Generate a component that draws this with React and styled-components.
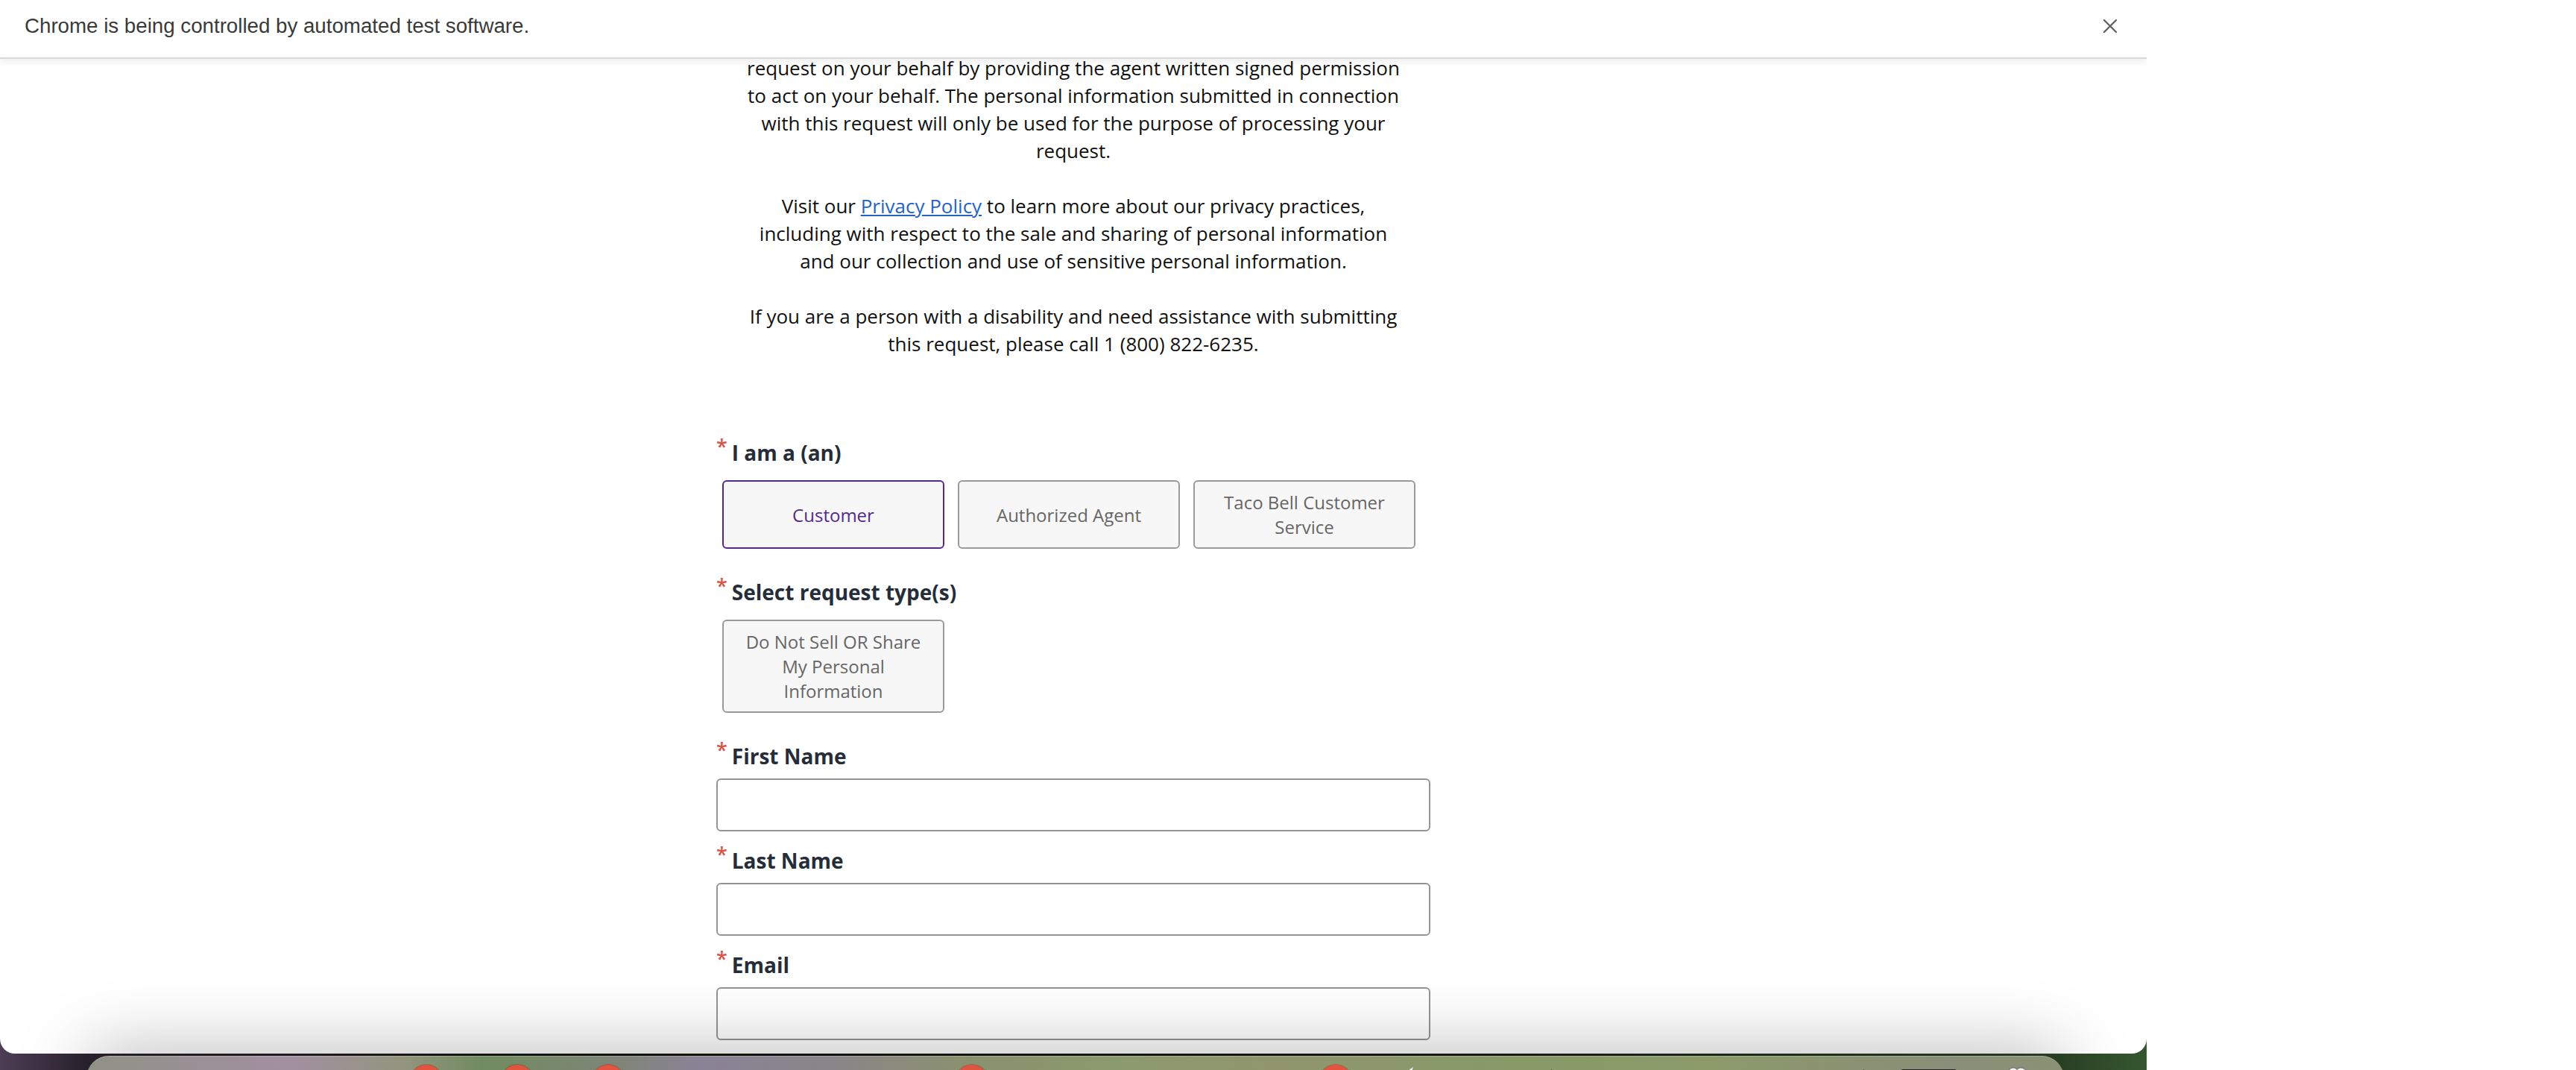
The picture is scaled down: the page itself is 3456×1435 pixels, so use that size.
import React from 'react';
import styled, { createGlobalStyle } from 'styled-components';

const GlobalStyle = createGlobalStyle`
	* {
		box-sizing: border-box;
	}
	html,
	body {
		margin: 0;
		padding: 0;
		background: #fff;
	}
	body {
		width: 3456px;
		height: 1435px;
		overflow: hidden;
		font-family: 'Open Sans', 'Liberation Sans', sans-serif;
	}
`;

const Screen = styled.div`
	display: flex;
	width: 3456px;
	height: 1435px;
	background: #fff;
`;

const Desktop = styled.div`
	width: 2880px;
	height: 1435px;
	flex: none;
	overflow: hidden;
	display: flex;
	flex-direction: column;
	background: linear-gradient(90deg, #4d3d55 0%, #2b2430 4%, #15170f 30%, #1a2016 70%, #2d4527 96%, #355630 100%);
`;

const Window = styled.div`
	height: 1413px;
	flex: none;
	background: #fff;
	border-radius: 0 0 20px 20px;
	overflow: hidden;
	display: flex;
	flex-direction: column;
`;

const Infobar = styled.div`
	position: relative;
	z-index: 2;
	flex: none;
	height: 79px;
	padding: 0 38px 8px 33px;
	display: flex;
	align-items: center;
	justify-content: space-between;
	background: #fff;
	border-bottom: 2px solid #d9d9d9;
	box-shadow: 0 3px 10px rgba(0, 0, 0, 0.08);
	font-family: 'Liberation Sans', Arial, sans-serif;
	font-size: 27.7px;
	color: #3a3a3a;
`;

const CloseButton = styled.button`
	width: 22px;
	height: 22px;
	padding: 0;
	border: 0;
	background: transparent;
	display: flex;
	align-items: center;
	justify-content: center;
`;

const Page = styled.div`
	flex: 1;
	margin-top: -6px;
	display: flex;
	flex-direction: column;
	align-items: center;
`;

const Notice = styled.div`
	width: 960px;
	text-align: center;
	font-size: 26px;
	line-height: 37px;
	color: #111;

	p {
		margin: 0 0 37px;
	}
	p:last-child {
		margin-bottom: 0;
	}
	a {
		color: #2563c8;
		text-decoration: underline;
	}
`;

const Form = styled.form`
	width: 958px;
	margin-top: 107px;
`;

const Field = styled.div`
	margin-bottom: ${({ compact }) => (compact ? '19px' : '21px')};
`;

const Label = styled.label`
	display: flex;
	align-items: flex-start;
	height: 40px;
	line-height: 40px;
	font-size: 28px;
	font-weight: 700;
	color: #252d39;
`;

const Req = styled.abbr`
	color: #d6564a;
	font-size: 27px;
	line-height: 24px;
	font-weight: 600;
	text-decoration: none;
	margin-right: 6px;
`;

const ChoiceGroup = styled.div`
	display: flex;
	gap: 18px;
	padding: 17px 0 17px 8px;
`;

const Choice = styled.button`
	width: 298px;
	height: ${({ tall }) => (tall ? '125px' : '92px')};
	padding: 0 24px;
	display: flex;
	align-items: center;
	justify-content: center;
	text-align: center;
	background: #f7f7f7;
	border: 2px solid ${({ selected }) => (selected ? '#55288a' : '#9a9a9a')};
	border-radius: 6px;
	font-family: 'Open Sans', sans-serif;
	font-size: 24px;
	line-height: 33px;
	color: ${({ selected }) => (selected ? '#55288a' : '#666')};
`;

const TextInput = styled.input`
	display: block;
	width: 100%;
	height: 71px;
	margin-top: 10px;
	background: #fff;
	border: 2px solid #949494;
	border-radius: 6px;
	font-size: 24px;
`;

const Dock = styled.div`
	position: relative;
	z-index: 3;
	flex: none;
	width: 2653px;
	height: 60px;
	margin: 3px 0 0 116px;
	border-radius: 30px 30px 0 0;
	border-top: 1px solid rgba(255, 255, 255, 0.25);
	box-shadow: 0 0 96px rgba(0, 0, 0, 0.36);
	background: linear-gradient(
		90deg,
		#8f9186 0%,
		#a28fa1 10%,
		#93957f 16%,
		#718b60 20%,
		#7f8578 27%,
		#8a8296 31%,
		#8a8588 38%,
		#8a9070 44%,
		#8b9a6c 52%,
		#90956e 60%,
		#879a68 72%,
		#8c9a6a 82%,
		#888f78 94%,
		#8a9275 100%
	);
	display: flex;
	align-items: flex-start;
	padding: 11px 0 0 395px;
`;

const Slot = styled.div`
	width: 122px;
	flex: none;
	display: flex;
	justify-content: ${({ start }) => (start ? 'flex-start' : 'center')};
	padding-left: ${({ start }) => (start ? '17px' : '0')};
`;

const Badge = styled.div`
	width: 44px;
	height: 44px;
	border-radius: 50%;
	background: #e4533e;
	box-shadow: 0 0 0 1px rgba(120, 40, 30, 0.35);
`;

const Separator = styled.div`
	width: 1px;
	height: 20px;
	flex: none;
	margin: 6px 0 0 ${({ gap }) => gap}px;
	background: rgba(30, 30, 30, 0.6);
`;

const DarkTile = styled.div`
	width: 75px;
	height: 20px;
	flex: none;
	margin: 6px 0 0 49px;
	background: #262626;
	border-radius: 3px 3px 0 0;
`;

const TrashIcon = styled.svg`
	flex: none;
	margin: 1px 0 0 53px;
`;

const CloseIcon = () => (
	<svg width="20" height="20" viewBox="0 0 20 20">
		<path d="M2 2 L18 18 M18 2 L2 18" stroke="#5f6368" strokeWidth="2.4" strokeLinecap="round" />
	</svg>
);

const badges = [true, true, true, false, false, false, true, false, false, false, true];

const App = () => {
	return (
		<Screen>
			<GlobalStyle />
			<Desktop>
				<Window>
					<Infobar>
						<span>Chrome is being controlled by automated test software.</span>
						<CloseButton aria-label="Close">
							<CloseIcon />
						</CloseButton>
					</Infobar>
					<Page>
						<Notice>
							<p>
								request on your behalf by providing the agent written signed permission
								<br />
								to act on your behalf. The personal information submitted in connection
								<br />
								with this request will only be used for the purpose of processing your
								<br />
								request.
							</p>
							<p>
								Visit our <a href="#privacy">Privacy Policy</a> to learn more about our privacy practices,
								<br />
								including with respect to the sale and sharing of personal information
								<br />
								and our collection and use of sensitive personal information.
							</p>
							<p>
								If you are a person with a disability and need assistance with submitting
								<br />
								this request, please call 1 (800) 822-6235.
							</p>
						</Notice>
						<Form onSubmit={(e) => e.preventDefault()}>
							<Field>
								<Label>
									<Req title="required">*</Req>I am a (an)
								</Label>
								<ChoiceGroup>
									<Choice type="button" selected>
										Customer
									</Choice>
									<Choice type="button">Authorized Agent</Choice>
									<Choice type="button">Taco Bell Customer Service</Choice>
								</ChoiceGroup>
							</Field>
							<Field>
								<Label>
									<Req title="required">*</Req>Select request type(s)
								</Label>
								<ChoiceGroup>
									<Choice type="button" tall>
										Do Not Sell OR Share My Personal Information
									</Choice>
								</ChoiceGroup>
							</Field>
							<Field compact>
								<Label>
									<Req title="required">*</Req>First Name
								</Label>
								<TextInput type="text" />
							</Field>
							<Field compact>
								<Label>
									<Req title="required">*</Req>Last Name
								</Label>
								<TextInput type="text" />
							</Field>
							<Field compact>
								<Label>
									<Req title="required">*</Req>Email
								</Label>
								<TextInput type="email" />
							</Field>
						</Form>
					</Page>
				</Window>
				<Dock>
					{badges.map((on, i) => (
						<Slot key={i}>{on && <Badge />}</Slot>
					))}
					<Slot start>
						<svg width="28" height="20" viewBox="0 0 28 20">
							<path d="M26 3 L4 18 L20 20 Z" fill="#f4f4f4" />
						</svg>
					</Slot>
					<Separator gap={106} />
					<Separator gap={418} />
					<DarkTile />
					<TrashIcon width="53" height="20" viewBox="0 0 53 20">
						<path
							d="M4 20 C4 10 10 6 16 8 C18 3 24 1 28 5 C32 1 40 3 41 9 C47 8 50 13 50 20 Z"
							fill="#f2f2f2"
							stroke="#7a7a7a"
							strokeWidth="1.5"
						/>
					</TrashIcon>
				</Dock>
			</Desktop>
		</Screen>
	);
};

export default App;
